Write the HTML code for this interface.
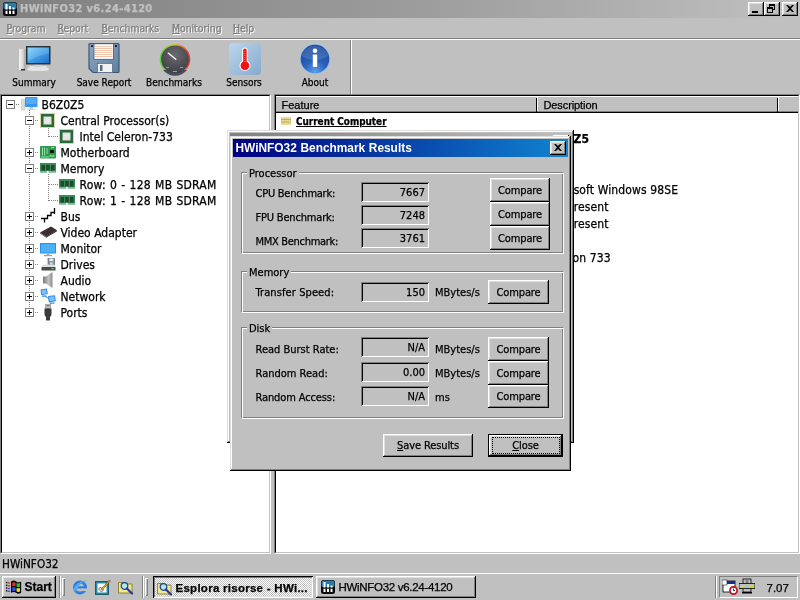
<!DOCTYPE html>
<html><head><meta charset="utf-8"><title>HWiNFO32</title>
<style>
*{box-sizing:border-box;margin:0;padding:0}
html,body{width:800px;height:600px;overflow:hidden;background:#c0c0c0}
body{position:relative;-webkit-text-stroke:.25px;-webkit-font-smoothing:antialiased;will-change:transform;font-family:"DejaVu Sans Condensed","DejaVu Sans","Liberation Sans",sans-serif;font-size:12px;color:#000}
.a{position:absolute}
.nw{white-space:nowrap}
#title{left:0;top:0;width:800px;height:18px;background:linear-gradient(90deg,#808080,#9b9b9b 50%,#c0c0c0)}
#title .t{left:20px;top:1px;color:#c0c0c0;font-weight:bold;font-size:11px;line-height:16px;letter-spacing:.36px}
.cb{width:16px;height:14px;top:2px;background:#c0c0c0;box-shadow:inset -1px -1px 0 #000,inset 1px 1px 0 #fff,inset -2px -2px 0 #808080,inset 2px 2px 0 #dfdfdf}
.mi{top:20px;line-height:16px;font-size:10.3px;color:#808080;text-shadow:1px 1px 0 #fff}
.hl{left:0;width:800px;height:1px}
.tl{top:77px;font-size:10px;line-height:12px;text-align:center;white-space:nowrap}
.pane{border:1px solid;border-color:#808080 #fff #fff #808080;background:#fff}
.pane:before{content:"";position:absolute;left:0;top:0;right:0;bottom:0;border:1px solid;border-color:#000 #c0c0c0 #c0c0c0 #000;pointer-events:none}
.tr{height:16px;line-height:16px;white-space:nowrap;font-size:12px}
.eb{width:9px;height:9px;border:1px solid #808080;background:#fff}
.eb i{position:absolute;left:1px;top:3px;width:5px;height:1px;background:#000}
.eb b{position:absolute;left:3px;top:1px;width:1px;height:5px;background:#000}
.dv{width:1px;background-image:linear-gradient(#808080 50%,transparent 50%);background-size:1px 2px}
.dh{height:1px;background-image:linear-gradient(90deg,#808080 50%,transparent 50%);background-size:2px 1px}
.hd{font-family:"Liberation Sans",sans-serif;font-size:11px;line-height:14px}
.ms{font-family:"Liberation Sans",sans-serif}
.btn{background:#c0c0c0;box-shadow:inset -1px -1px 0 #000,inset 1px 1px 0 #fff,inset -2px -2px 0 #808080,inset 2px 2px 0 #dfdfdf}
.dl{font-size:11px;line-height:14px}
.lg{background:#c0c0c0;padding:0 2px}
.grp{border:1px solid;border-color:#808080 #fff #fff #808080;box-shadow:inset 1px 1px 0 #fff,inset -1px -1px 0 #808080}
.vb{width:68px;height:20px;background:#c0c0c0;box-shadow:inset 1px 1px 0 #808080,inset -1px -1px 0 #fff,inset 2px 2px 0 #000,inset -2px -2px 0 #c0c0c0;font-size:11px;line-height:14px;text-align:right}
.vb span{position:absolute;right:4px;top:4px}
.bt{font-size:11px;letter-spacing:-.1px;line-height:25px;text-align:center}
</style></head><body>
<!-- main title bar -->
<div id="title" class="a"><span class="a t nw">HWiNFO32 v6.24-4120</span></div>
<svg class="a" style="left:3px;top:2px" width="14" height="14" viewBox="0 0 14 14"><rect width="14" height="14" rx="2.5" fill="#0a0a0a"/><rect x=".5" y=".5" width="13" height="7" rx="2" fill="#2a7aa8"/><rect x="2.5" y="2" width="2" height="10" fill="#fff"/><rect x="6" y="4" width="2" height="8" fill="#fff"/><rect x="9.5" y="5.5" width="2" height="6.5" fill="#fff"/><rect x="0" y="7.5" width="14" height="1.2" fill="#0a0a0a"/></svg>
<div class="a cb" style="left:748px"><i class="a" style="left:4px;top:9px;width:6px;height:2px;background:#000"></i></div>
<div class="a cb" style="left:764px"><i class="a" style="left:5px;top:2px;width:6px;height:6px;border:1px solid #000;border-top-width:2px"></i><i class="a" style="left:3px;top:5px;width:6px;height:6px;border:1px solid #000;border-top-width:2px;background:#c0c0c0"></i></div>
<div class="a cb" style="left:782px"><svg class="a" style="left:4px;top:3px" width="8" height="7" viewBox="0 0 8 7"><path d="M0 0h2l2 2 2-2h2l-3 3.5 3 3.5h-2l-2-2-2 2h-2l3-3.5z" fill="#000"/></svg></div>
<!-- menu -->
<span class="a mi nw" style="left:6.5px"><u>P</u>rogram</span>
<span class="a mi nw" style="left:57.5px"><u>R</u>eport</span>
<span class="a mi nw" style="left:101.5px"><u>B</u>enchmarks</span>
<span class="a mi nw" style="left:172px"><u>M</u>onitoring</span>
<span class="a mi nw" style="left:233px"><u>H</u>elp</span>
<div class="a hl" style="top:38px;background:#808080"></div>
<div class="a hl" style="top:39px;background:#fff"></div>
<!-- toolbar -->
<svg class="a" style="left:16px;top:43px" width="40" height="32" viewBox="0 0 40 32">
<defs><linearGradient id="scr" x1="0" y1="0" x2="1" y2="1"><stop offset="0" stop-color="#7fd0fa"/><stop offset=".5" stop-color="#3f9fe6"/><stop offset="1" stop-color="#1f6fc8"/></linearGradient>
<linearGradient id="twr" x1="0" y1="0" x2="1" y2="0"><stop offset="0" stop-color="#f4f4f4"/><stop offset=".6" stop-color="#d8d8d8"/><stop offset="1" stop-color="#9a9a9a"/></linearGradient></defs>
<rect x="3" y="6" width="6.5" height="21" rx="1" fill="url(#twr)"/><rect x="5" y="26" width="4" height="1.5" fill="#333"/>
<path d="M14 23h16l3 3.5q0 1.5-11 1.5t-11-1.5z" fill="#e4e4e4"/><rect x="18" y="21" width="8" height="3" fill="#d0d0d0"/>
<rect x="10" y="3" width="24.5" height="18.5" fill="#26323c"/><rect x="11.5" y="4.5" width="21.5" height="15.5" fill="url(#scr)"/>
<path d="M11.500 4.500h21.500v6q-10 1-21.500 8z" fill="#fff" opacity=".15"/>
</svg>
<span class="a tl" style="left:0;width:68px">Summary</span>
<svg class="a" style="left:88px;top:42px" width="32" height="32" viewBox="0 0 32 32">
<defs><linearGradient id="flp" x1="0" y1="0" x2="1" y2="1"><stop offset="0" stop-color="#8fa8c4"/><stop offset="1" stop-color="#5f7f9f"/></linearGradient></defs>
<path d="M2 1.500h28q1 0 1 1v27q0 1-1 1h-25l-4-4v-24q0-1 1-1z" fill="url(#flp)" stroke="#3c5878" stroke-width="1.200"/>
<rect x="6" y="1.800" width="19.500" height="15.500" fill="#fff" stroke="#3c5878" stroke-width=".8"/>
<g stroke="#f3c4ac" stroke-width="1"><path d="M7 4.500h17.500M7 6.500h17.500M7 8.500h17.500M7 10.500h17.500M7 12.500h17.500M7 14.500h17.500"/></g>
<rect x="3" y="3" width="2" height="2" fill="#223"/><rect x="27" y="3" width="2" height="2" fill="#223"/>
<rect x="9.500" y="21.500" width="15" height="9" fill="#f2f2f2" stroke="#3c5878" stroke-width=".6"/><rect x="12" y="23" width="2.500" height="6" fill="#5a6a7a"/>
</svg>
<span class="a tl" style="left:70px;width:68px">Save Report</span>
<svg class="a" style="left:158px;top:42px" width="34" height="34" viewBox="0 0 34 34">
<defs><linearGradient id="rim" x1="0" y1="0" x2="1" y2="0"><stop offset="0" stop-color="#4fd03a"/><stop offset=".45" stop-color="#c8d030"/><stop offset=".7" stop-color="#f08030"/><stop offset="1" stop-color="#e03030"/></linearGradient>
<radialGradient id="dial" cx=".5" cy=".35" r=".7"><stop offset="0" stop-color="#6a6a6e"/><stop offset="1" stop-color="#3c3c44"/></radialGradient></defs>
<circle cx="17" cy="17.300" r="15.300" fill="url(#rim)"/><path d="M5 28a15.300 15.300 0 0 0 24 0z" fill="#4a4a5a"/>
<circle cx="17" cy="17.300" r="13.800" fill="url(#dial)"/>
<path d="M17.800 17.300l-7.600-6.200" stroke="#fff" stroke-width="1.300" stroke-linecap="round"/>
<g fill="#9a9aa4"><rect x="8" y="25" width="3" height="1"/><rect x="15" y="29" width="4" height="1"/><rect x="22" y="25" width="3" height="1"/></g>
</svg>
<span class="a tl" style="left:140px;width:68px">Benchmarks</span>
<svg class="a" style="left:229px;top:43px" width="32" height="32" viewBox="0 0 32 32">
<defs><linearGradient id="sns" x1="0" y1="0" x2="1" y2="1"><stop offset="0" stop-color="#bcd6ee"/><stop offset="1" stop-color="#86aacc"/></linearGradient></defs>
<rect width="32" height="32" rx="4" fill="url(#sns)"/>
<path d="M13.600 7.300a2.300 2.300 0 0 1 4.600 0v11a4.900 4.900 0 1 1-4.600 0z" fill="#f01010" stroke="#fff" stroke-width="1.100"/>
<path d="M15.900 8v11" stroke="#ff8080" stroke-width="1" stroke-dasharray="1 1"/>
</svg>
<span class="a tl" style="left:210px;width:68px">Sensors</span>
<svg class="a" style="left:299px;top:43px" width="32" height="32" viewBox="0 0 32 32">
<defs><radialGradient id="abt" cx=".5" cy=".95" r=".9"><stop offset="0" stop-color="#5aa0f0"/><stop offset=".45" stop-color="#2a60b8"/><stop offset="1" stop-color="#1c4a9c"/></radialGradient></defs>
<circle cx="16" cy="16" r="15.200" fill="#9cc0e8"/><circle cx="16" cy="16" r="14.300" fill="url(#abt)"/>
<path d="M2.500 13a14 14 0 0 1 27 0q-13 8-27 0z" fill="#fff" opacity=".12"/>
<circle cx="16" cy="7.800" r="2.300" fill="#fff"/><rect x="13.800" y="11.500" width="4.400" height="12.500" rx=".8" fill="#fff"/>
</svg>
<span class="a tl" style="left:280px;width:70px">About</span>
<div class="a" style="left:350px;top:40px;width:1px;height:54px;background:#808080"></div>
<div class="a" style="left:351px;top:40px;width:1px;height:54px;background:#fff"></div>

<!--PANES_START-->
<div class="a pane" style="left:0;top:94px;width:271px;height:460px"></div>
<div class="a pane" style="left:274px;top:94px;width:526px;height:460px"></div>
<div class="a" style="left:276px;top:96px;width:522px;height:17px;background:#c0c0c0;border-top:1px solid #fff;border-bottom:1px solid #000"></div>
<div class="a" style="left:276px;top:111px;width:522px;height:1px;background:#808080"></div>
<div class="a" style="left:536px;top:98px;width:1px;height:14px;background:#000"></div><div class="a" style="left:537px;top:97px;width:1px;height:14px;background:#fff"></div>
<div class="a" style="left:777px;top:98px;width:1px;height:14px;background:#000"></div><div class="a" style="left:778px;top:97px;width:1px;height:14px;background:#fff"></div>
<span class="a nw hd" style="left:281.5px;top:98px">Feature</span>
<span class="a nw hd" style="left:543.5px;top:98px;letter-spacing:-.1px">Description</span>
<div class="a eb" style="left:6px;top:100px"><i></i></div>
<div class="a dh" style="left:16px;top:104px;width:4px"></div>
<svg class="a" style="left:21px;top:97px" width="17" height="14" viewBox="0 0 17 14"><rect x="0" y="2.500" width="4" height="10.500" rx=".8" fill="#dcdcdc" stroke="#b0b0b0" stroke-width=".5"/><rect x="4" y="0" width="12.500" height="10" rx="1" fill="#3a96ee"/><rect x="5" y="1" width="10.500" height="6" fill="#6ab6f6" opacity=".6"/><rect x="8.500" y="10" width="3.500" height="2" fill="#b8c8d8"/><rect x="6.500" y="12" width="7.500" height="1.200" fill="#c8d4e0"/></svg>
<span class="a tr" style="left:41.5px;top:97px">B6Z0Z5</span>
<div class="a eb" style="left:25px;top:116px"><i></i></div>
<div class="a dh" style="left:35px;top:120px;width:4px"></div>
<svg class="a" style="left:40px;top:113px" width="15" height="15" viewBox="0 0 15 15"><rect x=".5" y=".5" width="14" height="14" fill="none" stroke="#c8a040" stroke-width="1" stroke-dasharray="1 1"/><rect x="1" y="1" width="13" height="13" fill="#2a6a3a"/><rect x="3.500" y="3.500" width="8" height="8" fill="#dcdcdc"/><rect x="4.500" y="4.500" width="6" height="6" fill="#e8e8e8"/></svg>
<span class="a tr" style="left:60.5px;top:113px">Central Processor(s)</span>
<div class="a dh" style="left:49px;top:136px;width:9px"></div>
<svg class="a" style="left:59px;top:129px" width="15" height="15" viewBox="0 0 15 15"><rect x=".5" y=".5" width="14" height="14" fill="none" stroke="#c8a040" stroke-width="1" stroke-dasharray="1 1"/><rect x="1" y="1" width="13" height="13" fill="#2a6a3a"/><rect x="3.500" y="3.500" width="8" height="8" fill="#dcdcdc"/><rect x="4.500" y="4.500" width="6" height="6" fill="#e8e8e8"/></svg>
<span class="a tr" style="left:79.5px;top:129px">Intel Celeron-733</span>
<div class="a eb" style="left:25px;top:148px"><i></i><b></b></div>
<div class="a dh" style="left:35px;top:152px;width:4px"></div>
<svg class="a" style="left:40px;top:146px" width="16" height="13" viewBox="0 0 16 13"><rect width="16" height="12.500" rx=".8" fill="#2f9a50"/><g fill="#8fe0a4"><rect x="2" y="1.500" width="1" height="8"/><rect x="4" y="1.500" width="1" height="8"/><rect x="6.500" y="2" width="1" height="6"/><rect x="1" y="10.500" width="8" height="1"/><rect x="11" y="1" width="3" height="1"/></g><rect x="10" y="4" width="4" height="3" fill="#111"/><rect x="9.500" y="9" width="5" height="2" fill="#6cc888"/></svg>
<span class="a tr" style="left:60.5px;top:145px">Motherboard</span>
<div class="a eb" style="left:25px;top:164px"><i></i></div>
<div class="a dh" style="left:35px;top:168px;width:4px"></div>
<svg class="a" style="left:40px;top:163px" width="16" height="10" viewBox="0 0 16 10"><rect width="16" height="9.500" fill="#3c8a58"/><g fill="#1e4a30"><rect x="1.500" y="2" width="3.500" height="5.500"/><rect x="6.200" y="2" width="3.500" height="5.500"/><rect x="11" y="2" width="3.500" height="5.500"/></g><rect x="0" y="8.300" width="16" height="1.200" fill="#8cd0a0"/><rect x="7" y="7.800" width="1.500" height="2.200" fill="#fff"/></svg>
<span class="a tr" style="left:60.5px;top:161px">Memory</span>
<div class="a dh" style="left:49px;top:184px;width:9px"></div>
<svg class="a" style="left:59px;top:179px" width="16" height="10" viewBox="0 0 16 10"><rect width="16" height="9.500" fill="#3c8a58"/><g fill="#1e4a30"><rect x="1.500" y="2" width="3.500" height="5.500"/><rect x="6.200" y="2" width="3.500" height="5.500"/><rect x="11" y="2" width="3.500" height="5.500"/></g><rect x="0" y="8.300" width="16" height="1.200" fill="#8cd0a0"/><rect x="7" y="7.800" width="1.500" height="2.200" fill="#fff"/></svg>
<span class="a tr" style="left:79.5px;top:177px;letter-spacing:.24px;word-spacing:.5px">Row: 0 - 128 MB SDRAM</span>
<div class="a dh" style="left:49px;top:200px;width:9px"></div>
<svg class="a" style="left:59px;top:195px" width="16" height="10" viewBox="0 0 16 10"><rect width="16" height="9.500" fill="#3c8a58"/><g fill="#1e4a30"><rect x="1.500" y="2" width="3.500" height="5.500"/><rect x="6.200" y="2" width="3.500" height="5.500"/><rect x="11" y="2" width="3.500" height="5.500"/></g><rect x="0" y="8.300" width="16" height="1.200" fill="#8cd0a0"/><rect x="7" y="7.800" width="1.500" height="2.200" fill="#fff"/></svg>
<span class="a tr" style="left:79.5px;top:193px;letter-spacing:.24px;word-spacing:.5px">Row: 1 - 128 MB SDRAM</span>
<div class="a eb" style="left:25px;top:212px"><i></i><b></b></div>
<div class="a dh" style="left:35px;top:216px;width:4px"></div>
<svg class="a" style="left:40px;top:208px" width="17" height="15" viewBox="0 0 17 15"><path d="M1 10.500h6.500v-3h3.500v-3h3.500M4.500 10.500v4M14.500 0v6" fill="none" stroke="#000" stroke-width="1.300"/></svg>
<span class="a tr" style="left:60.5px;top:209px">Bus</span>
<div class="a eb" style="left:25px;top:228px"><i></i><b></b></div>
<div class="a dh" style="left:35px;top:232px;width:4px"></div>
<svg class="a" style="left:40px;top:226px" width="17" height="12" viewBox="0 0 17 12"><path d="M0 6.500l11-6 6 3.800-11 6.500z" fill="#3a2e2e"/><path d="M0 6.500l6 4.300v1l-6-4.300z" fill="#6a5a5a"/><path d="M6 10.800l11-6.500v1l-11 6.500z" fill="#1a1414"/></svg>
<span class="a tr" style="left:60.5px;top:225px">Video Adapter</span>
<div class="a eb" style="left:25px;top:244px"><i></i><b></b></div>
<div class="a dh" style="left:35px;top:248px;width:4px"></div>
<svg class="a" style="left:40px;top:243px" width="16" height="14" viewBox="0 0 16 14"><rect width="16" height="10.500" rx=".6" fill="#2a8ee8"/><rect x="1" y="1" width="14" height="8.500" fill="#4ab2f6"/><rect x="6.500" y="10.500" width="3" height="1.500" fill="#9ab8d8"/><rect x="4" y="12" width="8" height="1.200" fill="#7aa8d8"/></svg>
<span class="a tr" style="left:60.5px;top:241px">Monitor</span>
<div class="a eb" style="left:25px;top:260px"><i></i><b></b></div>
<div class="a dh" style="left:35px;top:264px;width:4px"></div>
<svg class="a" style="left:41px;top:258px" width="15" height="13" viewBox="0 0 15 13"><rect x="7" y="0" width="6.500" height="7" fill="#8c98a8" stroke="#4a5666" stroke-width=".6"/><rect x="8.300" y=".5" width="4" height="2.500" fill="#e8e8f0"/><rect x="9" y="4.500" width="2.500" height="2" fill="#dde"/><path d="M2 6.500h11l1.500 2.500h-14z" fill="#e0e0e0"/><rect x=".5" y="9" width="14" height="3.500" fill="#4a4a4a"/><rect x="10.500" y="10.200" width="2" height="1" fill="#7f7"/></svg>
<span class="a tr" style="left:60.5px;top:257px">Drives</span>
<div class="a eb" style="left:25px;top:276px"><i></i><b></b></div>
<div class="a dh" style="left:35px;top:280px;width:4px"></div>
<svg class="a" style="left:43px;top:272px" width="10" height="16" viewBox="0 0 10 16"><defs><linearGradient id="spk" x1="0" y1="0" x2="1" y2="0"><stop offset="0" stop-color="#7a7a7a"/><stop offset=".6" stop-color="#c4c4c4"/><stop offset="1" stop-color="#8a8a8a"/></linearGradient></defs><path d="M0 4.500h3l6.500-4.500v16l-6.500-4.500h-3z" fill="url(#spk)"/></svg>
<span class="a tr" style="left:60.5px;top:273px">Audio</span>
<div class="a eb" style="left:25px;top:292px"><i></i><b></b></div>
<div class="a dh" style="left:35px;top:296px;width:4px"></div>
<svg class="a" style="left:40px;top:288px" width="16" height="16" viewBox="0 0 16 16"><g fill="#2a86e0"><path d="M.5 1.500l6.500-1 .8 5.500-6.500 1.200z"/><rect x="2" y="7.500" width="4.500" height="1.200"/><path d="M8 8l7-.8.800 6-7 1z"/><rect x="9.500" y="14.500" width="5" height="1.200"/></g><g fill="#7cc0f8"><path d="M1.500 2.300l4.700-.7.500 3.800-4.600.8z"/><path d="M9 8.800l5.200-.6.500 4.300-5.100.7z"/></g><path d="M5 8l4 3" stroke="#2a86e0" stroke-width="1"/></svg>
<span class="a tr" style="left:60.5px;top:289px">Network</span>
<div class="a eb" style="left:25px;top:308px"><i></i><b></b></div>
<div class="a dh" style="left:35px;top:312px;width:4px"></div>
<svg class="a" style="left:44px;top:304px" width="8" height="17" viewBox="0 0 8 17"><rect x="1.800" y="0" width="4.400" height="4.500" fill="#d8d8d8" stroke="#555" stroke-width=".6"/><rect x="2.800" y="1.200" width="1" height="1.200" fill="#333"/><rect x="4.300" y="1.200" width="1" height="1.200" fill="#333"/><path d="M.5 4.500h7v5.500q0 2-1.500 3v3.500h-4v-3.500q-1.500-1-1.500-3z" fill="#3a3a3a"/></svg>
<span class="a tr" style="left:60.5px;top:305px">Ports</span>
<div class="a dv" style="left:29px;top:110px;height:6px"></div>
<div class="a dv" style="left:29px;top:126px;height:22px"></div>
<div class="a dv" style="left:29px;top:158px;height:6px"></div>
<div class="a dv" style="left:29px;top:174px;height:38px"></div>
<div class="a dv" style="left:29px;top:222px;height:6px"></div>
<div class="a dv" style="left:29px;top:238px;height:6px"></div>
<div class="a dv" style="left:29px;top:254px;height:6px"></div>
<div class="a dv" style="left:29px;top:270px;height:6px"></div>
<div class="a dv" style="left:29px;top:286px;height:6px"></div>
<div class="a dv" style="left:29px;top:302px;height:6px"></div>
<div class="a dv" style="left:48px;top:128px;height:9px"></div>
<div class="a dv" style="left:48px;top:174px;height:27px"></div>
<svg class="a" style="left:281px;top:117px" width="10" height="8" viewBox="0 0 10 8"><rect width="10" height="8" rx="1" fill="#e8d890"/><path d="M0 2.500h10M0 5h10" stroke="#b8a050" stroke-width=".8"/></svg>
<span class="a nw" style="left:296px;top:113px;line-height:17px;font-size:9.9px;font-weight:bold;text-decoration:underline">Current Computer</span>
<span class="a nw" style="left:282px;top:131px;line-height:17px;font-weight:bold">Computer Name:</span>
<span class="a nw" style="left:542.5px;top:131px;line-height:17px;font-weight:bold">B6Z0Z5</span>
<span class="a nw" style="left:296px;top:182px;line-height:17px">Operating System:</span>
<span class="a nw" style="left:544px;top:182px;line-height:17px;letter-spacing:.12px">Microsoft Windows 98SE</span>
<span class="a nw" style="left:296px;top:199px;line-height:17px">Service Pack:</span>
<span class="a nw" style="left:544px;top:199px;line-height:17px;letter-spacing:.12px">Not present</span>
<span class="a nw" style="left:296px;top:216px;line-height:17px">UEFI Boot:</span>
<span class="a nw" style="left:544px;top:216px;line-height:17px;letter-spacing:.12px">Not present</span>
<span class="a nw" style="left:296px;top:250px;line-height:17px">Processor Name:</span>
<span class="a nw" style="left:544px;top:250px;line-height:17px;letter-spacing:.12px">Celeron 733</span>
<!--PANES_END-->
<!--STATUS_START-->
<!-- status bar -->
<span class="a nw" style="left:2px;top:556px;font-size:11.7px;line-height:16px">HWiNFO32</span>
<!-- taskbar -->
<div class="a hl" style="top:573px;background:#fff"></div>
<div class="a btn" style="left:2px;top:576px;width:54px;height:22px"></div>
<svg class="a" style="left:5.5px;top:579.5px" width="16.5" height="14.7" viewBox="0 0 18 16">
<g fill="#000"><rect x="0" y="2" width="1.500" height="1.500"/><rect x="0" y="5" width="1.500" height="1.500"/><rect x="0" y="8" width="1.500" height="1.500"/><rect x="0" y="11" width="1.500" height="1.500"/></g>
<g><rect x="2" y="2.500" width="2.500" height="1.500" fill="#e03030"/><rect x="2" y="5.500" width="2.500" height="1.500" fill="#e03030"/><rect x="2" y="8.500" width="2.500" height="1.500" fill="#3050e0"/><rect x="2" y="11.500" width="2.500" height="1.500" fill="#3050e0"/></g>
<path d="M5.500 1.500q3-2 5.500 0t5.500 0v12.500q-3 2-5.500 0t-5.500 0z" fill="#000"/>
<path d="M6.800 3q2-1.200 3.700 0v4q-1.700-1.200-3.700 0z" fill="#e83020"/><path d="M11.500 3.300q2 1 3.800 0v4q-1.800 1-3.800 0z" fill="#30c030"/>
<path d="M6.800 8.300q2-1.200 3.700 0v4q-1.700-1.200-3.700 0z" fill="#3050e8"/><path d="M11.500 8.600q2 1 3.800 0v4q-1.800 1-3.800 0z" fill="#f0e020"/>
</svg>
<span class="a nw ms" style="left:24.500px;top:579.5px;font-weight:bold;font-size:12px;line-height:14px">Start</span>
<div class="a" style="left:59px;top:576px;width:1px;height:22px;background:#808080"></div><div class="a" style="left:60px;top:576px;width:1px;height:22px;background:#fff"></div>
<div class="a" style="left:62px;top:578px;width:3px;height:18px;background:#c0c0c0;box-shadow:inset 1px 1px 0 #fff,inset -1px -1px 0 #808080"></div>
<!-- quick launch icons -->
<svg class="a" style="left:72px;top:579px" width="16" height="16" viewBox="0 0 16 16"><circle cx="8" cy="8.500" r="5.500" fill="none" stroke="#2a80e0" stroke-width="3"/><rect x="4" y="7.300" width="9" height="2.200" fill="#2a80e0"/><rect x="9" y="9.500" width="6" height="2.500" fill="#c0c0c0"/><path d="M1 11q3-9 14-9.500q-8 2-11 11z" fill="#58a8f0"/></svg>
<svg class="a" style="left:95px;top:579px" width="16" height="16" viewBox="0 0 16 16"><rect x=".5" y="2.500" width="13" height="13" fill="#2a8aa0" stroke="#1a5a70"/><rect x="2.500" y="4.500" width="9" height="9" fill="#fff"/><path d="M3.500 10l3 3 2-2-3-3z" fill="#e8e0c0" stroke="#333" stroke-width=".6"/><path d="M6 10l8.500-9 1 1-8 9z" fill="#e0a030" stroke="#604010" stroke-width=".5"/></svg>
<svg class="a" style="left:118px;top:579px" width="16" height="16" viewBox="0 0 16 16"><path d="M.5 3.500h5l1.500 1.500h7v9h-13.500z" fill="#f4e690" stroke="#807020" stroke-width=".8"/><circle cx="6.500" cy="7" r="3.300" fill="#a8e8f0" stroke="#204080" stroke-width="1.200"/><path d="M9 9.500l5 5" stroke="#2038a0" stroke-width="2.200" stroke-linecap="round"/></svg>
<div class="a" style="left:142px;top:576px;width:1px;height:22px;background:#808080"></div><div class="a" style="left:143px;top:576px;width:1px;height:22px;background:#fff"></div>
<div class="a" style="left:145px;top:578px;width:3px;height:18px;background:#c0c0c0;box-shadow:inset 1px 1px 0 #fff,inset -1px -1px 0 #808080"></div>
<!-- task buttons -->
<div class="a" style="left:153px;top:576px;width:160px;height:22px;background-color:#fff;background-image:linear-gradient(45deg,#c0c0c0 25%,transparent 25%,transparent 75%,#c0c0c0 75%),linear-gradient(45deg,#c0c0c0 25%,transparent 25%,transparent 75%,#c0c0c0 75%);background-size:2px 2px;background-position:0 0,1px 1px;box-shadow:inset 1px 1px 0 #000,inset -1px -1px 0 #fff,inset 2px 2px 0 #808080,inset -2px -2px 0 #dfdfdf"></div>
<svg class="a" style="left:157px;top:580px" width="16" height="16" viewBox="0 0 16 16"><path d="M.5 3.500h5l1.500 1.500h7v9h-13.500z" fill="#f4e690" stroke="#807020" stroke-width=".8"/><circle cx="6.500" cy="7" r="3.300" fill="#a8e8f0" stroke="#204080" stroke-width="1.200"/><path d="M9 9.500l5 5" stroke="#2038a0" stroke-width="2.200" stroke-linecap="round"/></svg>
<span class="a nw ms" style="left:175.500px;top:581px;font-weight:bold;font-size:11.500px;line-height:14px;letter-spacing:.27px">Esplora risorse - HWi...</span>
<div class="a btn" style="left:316px;top:576px;width:160px;height:22px"></div>
<svg class="a" style="left:321px;top:580px" width="14" height="14" viewBox="0 0 14 14"><rect width="14" height="14" rx="2.500" fill="#0a0a0a"/><rect x=".5" y=".5" width="13" height="7" rx="2" fill="#2a7aa8"/><rect x="2.500" y="2" width="2" height="10" fill="#fff"/><rect x="6" y="4" width="2" height="8" fill="#fff"/><rect x="9.500" y="5.500" width="2" height="6.500" fill="#fff"/><rect x="0" y="7.500" width="14" height="1.200" fill="#0a0a0a"/></svg>
<span class="a nw ms" style="left:338.500px;top:580px;font-size:11.500px;line-height:14px;letter-spacing:-.3px">HWiNFO32 v6.24-4120</span>
<!-- tray -->
<div class="a" style="left:715px;top:576px;width:1px;height:22px;background:#808080"></div><div class="a" style="left:716px;top:576px;width:1px;height:22px;background:#fff"></div>
<div class="a" style="left:719px;top:576px;width:79px;height:22px;border:1px solid;border-color:#808080 #fff #fff #808080"></div>
<svg class="a" style="left:722px;top:579px" width="16" height="16" viewBox="0 0 16 16"><rect x="1" y="2" width="12" height="11" fill="#fff" stroke="#000" stroke-width=".8"/><rect x="1" y="2" width="12" height="3" fill="#1a2a8a"/><rect x="0" y="1" width="5" height="5" fill="#fff" stroke="#223" stroke-width=".6"/><circle cx="11.500" cy="11.500" r="3.600" fill="#fff" stroke="#c01020" stroke-width="1.700"/><path d="M11.500 9.500v2h1.500" stroke="#000" stroke-width=".8" fill="none"/></svg>
<svg class="a" style="left:739px;top:578px" width="16" height="17" viewBox="0 0 16 17"><rect x="4" y="1" width="8" height="13" fill="#c0c0c0" stroke="#000" stroke-width=".8"/><rect x="6.500" y="2" width="3" height="9" fill="#808080"/><rect x="0" y="5.500" width="16" height="5" fill="#c0c0c0" stroke="#000" stroke-width=".8"/><rect x="2" y="7" width="3" height="2" fill="#c8e020"/><rect x="11" y="7" width="3" height="2" fill="#c8e020"/><rect x="3" y="14" width="10" height="1.500" fill="#000"/></svg>
<span class="a nw ms" style="left:766.500px;top:581px;font-size:11.500px;line-height:14px">7.07</span>
<!--STATUS_END-->
<!--DIALOG_START-->
<!-- window behind dialog -->
<div class="a" style="left:227px;top:130px;width:347px;height:313px;background:#c0c0c0;box-shadow:inset -1px -1px 0 #000,inset 1px 1px 0 #dfdfdf,inset -2px -2px 0 #808080,inset 2px 2px 0 #fff"></div>
<div class="a" style="left:230px;top:133px;width:341px;height:18px;background:linear-gradient(90deg,#808080,#c0c0c0)"></div>
<div class="a btn" style="left:553px;top:135px;width:16px;height:14px"></div>
<!-- dialog -->
<div class="a" style="left:230px;top:136px;width:341px;height:335px;background:#c0c0c0;box-shadow:inset -1px -1px 0 #000,inset 1px 1px 0 #dfdfdf,inset -2px -2px 0 #808080,inset 2px 2px 0 #fff"></div>
<div class="a" style="left:233px;top:139px;width:335px;height:18px;background:linear-gradient(90deg,#000080,#1084d0)"></div>
<span class="a nw ms" style="left:235.500px;top:140px;color:#fff;font-weight:bold;font-size:11.9px;line-height:16px;-webkit-text-stroke:0;letter-spacing:0;word-spacing:.3px">HWiNFO32 Benchmark Results</span>
<div class="a btn" style="left:550px;top:141px;width:16px;height:14px"><svg class="a" style="left:4px;top:3px" width="8" height="7" viewBox="0 0 8 7"><path d="M0 0h2l2 2 2-2h2l-3 3.500 3 3.500h-2l-2-2-2 2h-2l3-3.500z" fill="#000"/></svg></div>
<!-- groups -->
<div class="a grp" style="left:241px;top:172px;width:323px;height:82px"></div>
<span class="a nw dl lg" style="left:247px;top:167px">Processor</span>
<div class="a grp" style="left:241px;top:271px;width:323px;height:42px"></div>
<span class="a nw dl lg" style="left:247px;top:266px">Memory</span>
<div class="a grp" style="left:241px;top:327px;width:323px;height:92px"></div>
<span class="a nw dl lg" style="left:247px;top:322px">Disk</span>
<!-- processor rows -->
<span class="a nw dl" style="left:255.500px;top:187px;letter-spacing:-0.25px">CPU Benchmark:</span>
<span class="a nw dl" style="left:255.500px;top:211px;letter-spacing:-0.18px">FPU Benchmark:</span>
<span class="a nw dl" style="left:255.500px;top:235px;letter-spacing:-0.3px">MMX Benchmark:</span>
<div class="a vb" style="left:361px;top:182px"><span>7667</span></div>
<div class="a vb" style="left:361px;top:205px"><span>7248</span></div>
<div class="a vb" style="left:361px;top:228px"><span>3761</span></div>
<div class="a btn bt" style="left:490px;top:178px;width:60px;height:24px">Compare</div>
<div class="a btn bt" style="left:490px;top:202px;width:60px;height:24px">Compare</div>
<div class="a btn bt" style="left:490px;top:226px;width:60px;height:24px">Compare</div>
<!-- memory -->
<span class="a nw dl" style="left:255.500px;top:286px;letter-spacing:0.1px">Transfer Speed:</span>
<div class="a vb" style="left:361px;top:282px"><span>150</span></div>
<span class="a nw dl" style="left:435px;top:286px">MBytes/s</span>
<div class="a btn bt" style="left:488px;top:280px;width:61px;height:24px">Compare</div>
<!-- disk -->
<span class="a nw dl" style="left:255.500px;top:343px">Read Burst Rate:</span>
<span class="a nw dl" style="left:255.500px;top:367px">Random Read:</span>
<span class="a nw dl" style="left:255.500px;top:391px;letter-spacing:-0.12px">Random Access:</span>
<div class="a vb" style="left:361px;top:337px"><span>N/A</span></div>
<div class="a vb" style="left:361px;top:362px"><span>0.00</span></div>
<div class="a vb" style="left:361px;top:386px"><span>N/A</span></div>
<span class="a nw dl" style="left:435px;top:343px">MBytes/s</span>
<span class="a nw dl" style="left:435px;top:367px">MBytes/s</span>
<span class="a nw dl" style="left:435px;top:391px">ms</span>
<div class="a btn bt" style="left:488px;top:337px;width:61px;height:24px">Compare</div>
<div class="a btn bt" style="left:488px;top:361px;width:61px;height:24px">Compare</div>
<div class="a btn bt" style="left:488px;top:385px;width:61px;height:23px;line-height:24px">Compare</div>
<!-- bottom buttons -->
<div class="a btn bt" style="left:383px;top:434px;width:90px;height:23px;line-height:24px"><u>S</u>ave Results</div>
<div class="a" style="left:488px;top:434px;width:75px;height:23px;background:#000"></div>
<div class="a btn bt" style="left:489px;top:435px;width:73px;height:21px;line-height:22px"><u>C</u>lose</div>
<div class="a" style="left:492px;top:437px;width:68px;height:17px;border:1px dotted #000"></div>
<!--DIALOG_END-->
</body></html>
